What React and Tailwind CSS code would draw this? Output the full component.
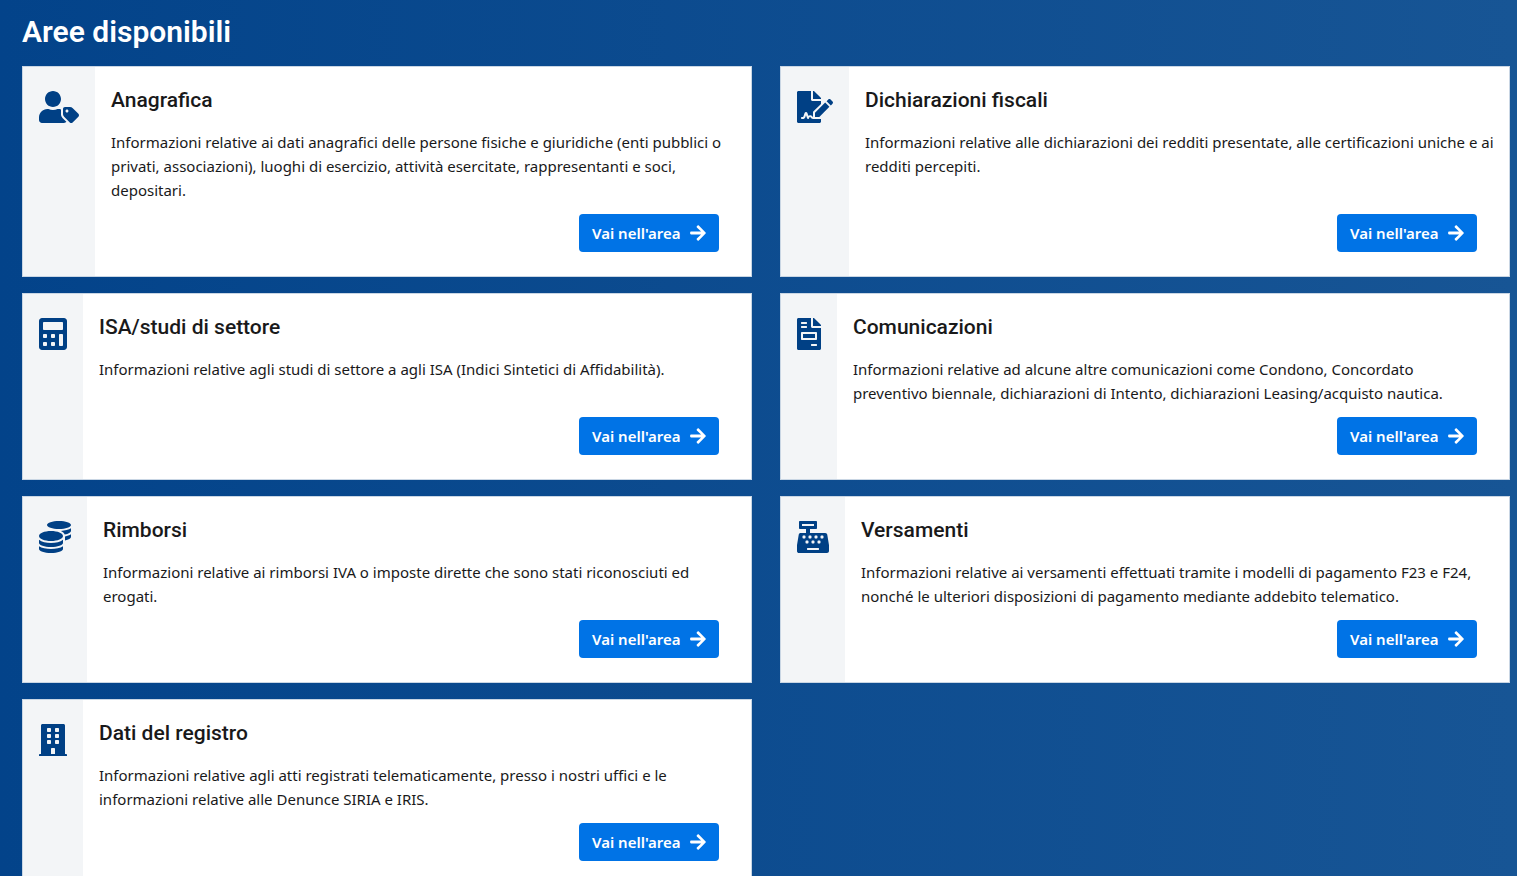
import { FaUserTag, FaFileSignature, FaCalculator, FaFileInvoice, FaCoins, FaCashRegister, FaBuilding, FaArrowRight } from 'react-icons/fa';

const areas = [
    {
        title: "Anagrafica",
        icon: FaUserTag,
        iconClass: "w-10",
        text: "Informazioni relative ai dati anagrafici delle persone fisiche e giuridiche (enti pubblici o privati, associazioni), luoghi di esercizio, attività esercitate, rappresentanti e soci, depositari."
    },
    {
        title: "Dichiarazioni fiscali",
        icon: FaFileSignature,
        iconClass: "w-9",
        textClass: "-mr-1",
        text: "Informazioni relative alle dichiarazioni dei redditi presentate, alle certificazioni uniche e ai redditi percepiti."
    },
    {
        title: "ISA/studi di settore",
        icon: FaCalculator,
        iconClass: "w-7",
        text: "Informazioni relative agli studi di settore a agli ISA (Indici Sintetici di Affidabilità)."
    },
    {
        title: "Comunicazioni",
        icon: FaFileInvoice,
        iconClass: "w-6",
        textClass: "pr-2",
        text: "Informazioni relative ad alcune altre comunicazioni come Condono, Concordato preventivo biennale, dichiarazioni di Intento, dichiarazioni Leasing/acquisto nautica."
    },
    {
        title: "Rimborsi",
        icon: FaCoins,
        iconClass: "w-8",
        text: "Informazioni relative ai rimborsi IVA o imposte dirette che sono stati riconosciuti ed erogati."
    },
    {
        title: "Versamenti",
        icon: FaCashRegister,
        iconClass: "w-8",
        text: "Informazioni relative ai versamenti effettuati tramite i modelli di pagamento F23 e F24, nonché le ulteriori disposizioni di pagamento mediante addebito telematico."
    },
    {
        title: "Dati del registro",
        icon: FaBuilding,
        iconClass: "w-7",
        text: "Informazioni relative agli atti registrati telematicamente, presso i nostri uffici e le informazioni relative alle Denunce SIRIA e IRIS."
    }
];

function AreaCard({ area }) {
    const Icon = area.icon;
    return (
        <div className="flex bg-white border border-[#c9d6e4]">
            <div className="bg-[#f3f5f7] px-4 pt-6 shrink-0">
                <Icon className={`${area.iconClass} h-8 text-[#004085]`} />
            </div>
            <div className="flex flex-col flex-1 min-w-0 pt-[19px] pl-4 pr-4 pb-6">
                <h3 className="font-['Roboto'] font-medium text-[21px] leading-7 text-[#19191a]">{area.title}</h3>
                <p className={`mt-4 min-h-12 text-[15px] leading-6 text-[#19191a] ${area.textClass || ""}`}>{area.text}</p>
                <div className="mt-auto pt-3 flex justify-end pr-4">
                    <a className="flex items-center justify-between w-[140px] h-[38px] px-[13px] rounded bg-[#0073e6] text-white text-[15px] font-semibold">
                        Vai nell'area
                        <FaArrowRight className="w-4 h-[18px]" />
                    </a>
                </div>
            </div>
        </div>
    );
}

export default function App() {
    return (
        <div className="h-[876px] overflow-hidden bg-gradient-to-r from-[#03438a] to-[#175595] pl-[22px] pt-3 font-['Noto_Sans',sans-serif]">
            <h1 className="font-['Roboto'] font-semibold text-[30px] leading-10 text-white mb-[14px]">Aree disponibili</h1>
            <div className="grid grid-cols-[730px_730px] gap-x-7 gap-y-4">
                {areas.map((area) => (
                    <AreaCard key={area.title} area={area} />
                ))}
            </div>
        </div>
    );
}
